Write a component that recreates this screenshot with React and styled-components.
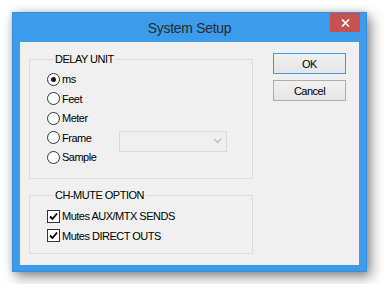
import React from 'react';
import styled, { createGlobalStyle } from 'styled-components';

const GlobalStyle = createGlobalStyle`
  body {
    margin: 0;
    background: #ffffff;
    font-family: "Liberation Sans", Arial, sans-serif;
  }
`;

const Page = styled.div`
  padding: 12px;
`;

const Window = styled.div`
  width: 355px;
  height: 260px;
  box-sizing: border-box;
  background: #3c9bea;
  border: 1px solid #3a8fd8;
  display: flex;
  flex-direction: column;
  box-shadow: 4px 5px 12px rgba(0, 0, 0, 0.45), 0 0 6px rgba(0, 0, 0, 0.15);
`;

const TitleBar = styled.div`
  height: 29px;
  display: grid;
  grid-template-columns: 1fr auto 1fr;
`;

const Title = styled.div`
  grid-column: 2;
  font-size: 14px;
  letter-spacing: -0.3px;
  color: #2b2b2b;
  line-height: 29px;
  padding-top: 1px;
`;

const CloseButton = styled.div`
  grid-column: 3;
  justify-self: end;
  align-self: start;
  width: 30px;
  height: 19px;
  margin-right: 6px;
  background: #c75050;
  display: flex;
  align-items: center;
  justify-content: center;
`;

const Client = styled.div`
  flex: 1;
  margin: 0 7px 6px 7px;
  background: #f0f0f0;
  display: flex;
  padding: 11px 13px 0 9px;
  font-size: 11px;
  letter-spacing: -0.5px;
  color: #000;
`;

const LeftColumn = styled.div`
  width: 224px;
  display: flex;
  flex-direction: column;
  gap: 10px;
`;

const Group = styled.fieldset`
  margin: 0;
  box-sizing: border-box;
  height: ${p => p.$height}px;
  border: 1px solid #dcdcdc;
  padding: ${p => p.$padTop}px 0 0 17px;
  display: flex;
  flex-direction: column;
  gap: ${p => p.$gap}px;
`;

const Legend = styled.legend`
  margin-left: 7px;
  padding: 0 2px 0 1px;
  line-height: 12px;
`;

const Row = styled.div`
  height: 16px;
  display: grid;
  grid-template-columns: 72px 108px;
  align-items: start;
`;

const Option = styled.label`
  height: 16px;
  display: flex;
  align-items: center;
  gap: 2px;
`;

const Radio = styled.span`
  width: 13px;
  height: 13px;
  box-sizing: border-box;
  border-radius: 50%;
  border: 1px solid #333;
  background: #fff;
  display: flex;
  align-items: center;
  justify-content: center;
  &::after {
    content: '';
    width: 5px;
    height: 5px;
    border-radius: 50%;
    background: ${p => (p.$checked ? '#1a1a1a' : 'transparent')};
  }
`;

const Check = styled.span`
  width: 13px;
  height: 13px;
  box-sizing: border-box;
  border: 1px solid #333;
  background: #fff;
  display: flex;
  align-items: center;
  justify-content: center;
`;

const Combo = styled.div`
  height: 21px;
  margin-top: 1px;
  box-sizing: border-box;
  border: 1px solid #d9d9d9;
  background: #efefef;
  display: flex;
  align-items: center;
  justify-content: flex-end;
  padding-right: 4px;
`;

const Buttons = styled.div`
  margin-left: auto;
  display: flex;
  flex-direction: column;
  gap: 6px;
`;

const Button = styled.div`
  width: 73px;
  height: 21px;
  box-sizing: border-box;
  border: 1px solid ${p => (p.$default ? '#3c9bea' : '#adadad')};
  background: linear-gradient(#f1f1f1, #e5e5e5);
  display: flex;
  align-items: center;
  justify-content: center;
`;

const units = ['ms', 'Feet', 'Meter', 'Frame', 'Sample'];

function CheckMark() {
  return (
    <svg width="9" height="9" viewBox="0 0 9 9">
      <path d="M1 4.5 L3.5 7 L8 1.5" fill="none" stroke="#000" strokeWidth="1.8" />
    </svg>
  );
}

export default function App() {
  return (
    <Page>
      <GlobalStyle />
      <Window>
        <TitleBar>
          <Title>System Setup</Title>
          <CloseButton>
            <svg width="9" height="8" viewBox="0 0 9 8">
              <path d="M1 0.5 L8 7.5 M8 0.5 L1 7.5" stroke="#fff" strokeWidth="1.7" />
            </svg>
          </CloseButton>
        </TitleBar>
        <Client>
          <LeftColumn>
            <Group $height={126} $padTop={6} $gap={3.5}>
              <Legend>DELAY UNIT</Legend>
              {units.map(u => (
                <Row key={u}>
                  <Option>
                    <Radio $checked={u === 'ms'} />
                    {u}
                  </Option>
                  {u === 'Frame' && (
                    <Combo>
                      <svg width="9" height="6" viewBox="0 0 9 6">
                        <path d="M1 1 L4.5 4.5 L8 1" fill="none" stroke="#bcbcbc" strokeWidth="1.4" />
                      </svg>
                    </Combo>
                  )}
                </Row>
              ))}
            </Group>
            <Group $height={65} $padTop={7} $gap={3.5}>
              <Legend>CH-MUTE OPTION</Legend>
              <Option>
                <Check><CheckMark /></Check>
                Mutes AUX/MTX SENDS
              </Option>
              <Option>
                <Check><CheckMark /></Check>
                Mutes DIRECT OUTS
              </Option>
            </Group>
          </LeftColumn>
          <Buttons>
            <Button $default>OK</Button>
            <Button>Cancel</Button>
          </Buttons>
        </Client>
      </Window>
    </Page>
  );
}
